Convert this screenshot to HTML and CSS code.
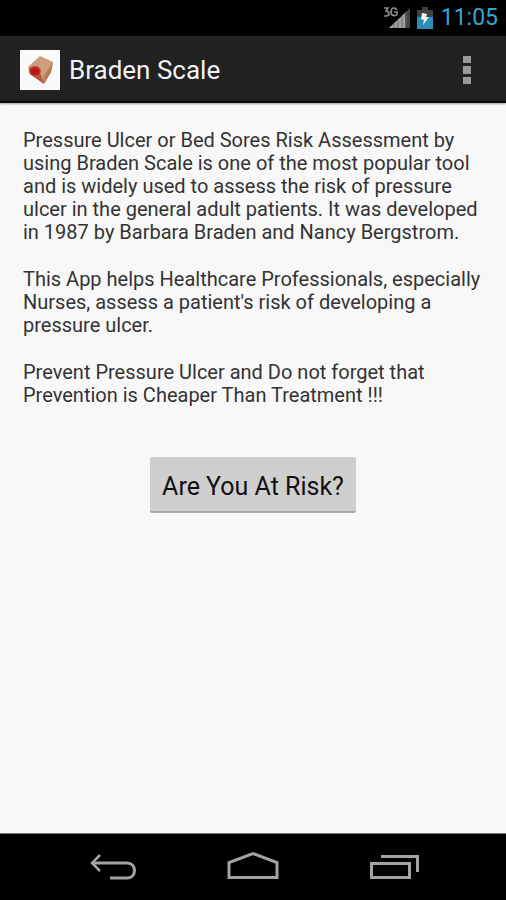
FILE: index.html
```html
<!DOCTYPE html>
<html lang="en">
<head>
<meta charset="utf-8">
<meta name="viewport" content="width=device-width, initial-scale=1">
<title>Braden Scale</title>
<link rel="stylesheet" href="styles.css">
</head>
<body>
<div class="status-bar">
  <svg class="signal" width="28" height="24" viewBox="0 0 28 24" aria-hidden="true">
    <path d="M7 22 28 2V22Z" fill="#454545"/>
    <path d="M7 22 23 7V22Z" fill="#a2a2a2"/>
    <path d="M12 18V22M16 14V22M20 10V22M24 6V22" stroke="#666" stroke-width="1"/>
    <path d="M0 0H16V12H0Z" fill="#000"/>
    <path d="M2 2H6L4 5C8 5 8 10 4 10H2M15 4C13 1 9 1 9 6C9 11 15 10 15 8V6H12" fill="none" stroke="#8d8d8d" stroke-width="1.600"/>
  </svg>
  <svg class="battery" width="16" height="22" viewBox="0 0 16 22" aria-hidden="true">
    <path d="M0 3H5V0H11V3H16V22H0Z" fill="#414141"/>
    <path d="M0 10H16V22H0Z" fill="#2a8db4"/>
    <path d="M5 6 10 7 9 10 12 10 6 18 7 13 4 12Z" fill="#f4f4f4"/>
  </svg>
  <time class="clock">11:05</time>
</div>
<header class="action-bar">
  <svg class="app-icon" width="40" height="40" viewBox="0 0 40 40" aria-hidden="true">
    <defs>
      <linearGradient id="skin" x1="0" y1="0" x2="1" y2="1">
        <stop offset="0" stop-color="#c49a7e"/><stop offset=".6" stop-color="#cfa07c"/><stop offset="1" stop-color="#a5603c"/>
      </linearGradient>
      <radialGradient id="wound"><stop offset="0" stop-color="#c80d10"/><stop offset=".6" stop-color="#b8201a"/><stop offset="1" stop-color="#b4573c" stop-opacity="0"/></radialGradient>
    </defs>
    <path d="M0 0H40V40H0Z" fill="#fbfafa"/>
    <path d="M20 6 33 12 31 22 24 34 10 24 8 17Z" fill="url(#skin)"/>
    <path d="M33 12 31 22 24 34 25 25Z" fill="#b67b54"/>
    <path d="M9 18 16 17 20 23 24 34 10 24Z" fill="#b4573c"/>
    <ellipse cx="15" cy="21" rx="7" ry="6" fill="url(#wound)"/>
  </svg>
  <h1 class="title">Braden Scale</h1>
  <button class="overflow" aria-label="More options">
    <svg width="10" height="30" viewBox="0 0 10 30" aria-hidden="true"><path d="M1 1H9V8H1ZM1 11H9V19H1ZM1 22H9V29H1Z" fill="#999"/></svg>
  </button>
</header>
<main class="content">
  <p>Pressure Ulcer or Bed Sores Risk Assessment by using Braden Scale is one of the most popular tool and is widely used to assess the risk of pressure ulcer in the general adult patients. It was developed in 1987 by Barbara Braden and Nancy Bergstrom.</p>
  <p>This App helps Healthcare Professionals, especially Nurses, assess a patient's risk of developing a pressure ulcer.</p>
  <p>Prevent Pressure Ulcer and Do not forget that Prevention is Cheaper Than Treatment !!!</p>
  <button class="risk-button">Are You At Risk?</button>
</main>
<nav class="nav-bar" aria-label="System">
  <button class="nav-button" aria-label="Back">
    <svg width="50" height="34" viewBox="0 0 50 34" fill="none" stroke="#a3a3a3" stroke-width="3" aria-hidden="true"><path d="M13 5 5 13 13 21" stroke-width="2.500"/><path d="M5 13H40C50 13 50 28 40 28H23"/></svg>
  </button>
  <button class="nav-button" aria-label="Home">
    <svg width="54" height="34" viewBox="0 0 54 34" fill="none" stroke="#a3a3a3" stroke-width="3" aria-hidden="true"><path d="M3 27.500V12.500L27 3.500 51 12.500V27.500Z"/></svg>
  </button>
  <button class="nav-button" aria-label="Recent apps">
    <svg width="50" height="34" viewBox="0 0 50 34" fill="none" stroke="#a3a3a3" stroke-width="3" aria-hidden="true"><path d="M2.500 13.500H40.500V27.500H2.500Z"/><path d="M12 6.500H48.500V22"/></svg>
  </button>
</nav>
</body>
</html>
```
FILE: styles.css
```css
* {
  box-sizing: border-box;
}

body {
  margin: 0;
  min-height: 100vh;
  display: flex;
  flex-direction: column;
  background: #f8f8f8;
  color: #333;
  font-family: Roboto, "Liberation Sans", sans-serif;
}

button {
  margin: 0;
  padding: 0;
  border: 0;
  background: none;
  font: inherit;
  color: inherit;
}

svg {
  display: block;
  flex: none;
}

.status-bar {
  display: flex;
  align-items: center;
  justify-content: flex-end;
  height: 36px;
  padding: 0 8px;
  background: #000;
}

.battery {
  margin: 0 8px 0 7px;
}

.clock {
  color: #33a6d6;
  font-size: 23px;
  line-height: 36px;
}

.action-bar {
  display: flex;
  align-items: center;
  gap: 9px;
  height: 67px;
  padding: 2px 24px 0 20px;
  background: #212121;
  border-bottom: 2px solid #090909;
  box-shadow: 0 1px 2px #999;
}

.title {
  flex: 1;
  margin: 0;
  color: #f3f3f3;
  font-size: 26px;
  font-weight: 400;
  line-height: 32px;
}

.overflow {
  width: 30px;
  display: flex;
  justify-content: center;
}

.content {
  flex: 1;
  display: flex;
  flex-direction: column;
  gap: 24px;
  padding: 26px 23px;
  font-size: 20px;
  line-height: 23px;
}

.content p {
  margin: 0;
}

.risk-button {
  align-self: center;
  height: 56px;
  margin-top: 26px;
  padding: 4px 12px 0;
  background: #cfcfcf;
  border-bottom: 2px solid #aaa;
  border-radius: 2px;
  color: #111;
  font-size: 25px;
}

.nav-bar {
  display: flex;
  height: 67px;
  padding: 0 42px;
  background: #000;
  border-top: 1px solid #777;
}

.nav-button {
  flex: 1;
  display: flex;
  align-items: center;
  justify-content: center;
}
```
